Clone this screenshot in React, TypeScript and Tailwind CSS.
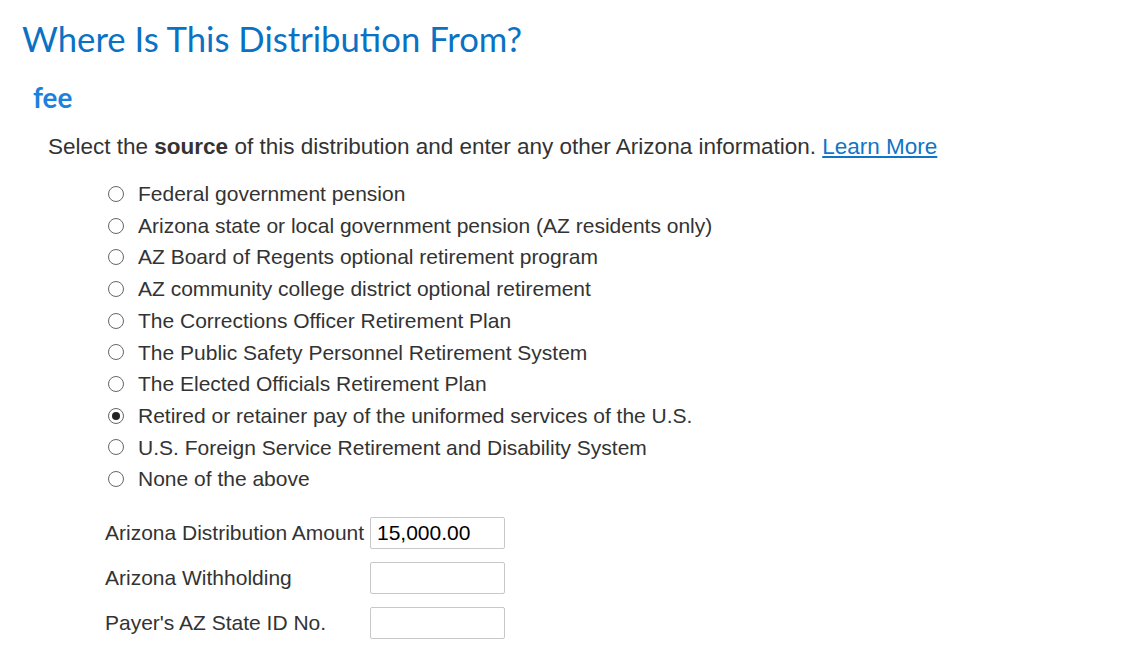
import { useState } from "react";

const sources = [
  "Federal government pension",
  "Arizona state or local government pension (AZ residents only)",
  "AZ Board of Regents optional retirement program",
  "AZ community college district optional retirement",
  "The Corrections Officer Retirement Plan",
  "The Public Safety Personnel Retirement System",
  "The Elected Officials Retirement Plan",
  "Retired or retainer pay of the uniformed services of the U.S.",
  "U.S. Foreign Service Retirement and Disability System",
  "None of the above",
];

function Radio({ checked }: { checked: boolean }) {
  return (
    <span className="flex h-[16px] w-[16px] items-center justify-center rounded-full border border-[#666] bg-white">
      {checked && <span className="h-[8px] w-[8px] rounded-full bg-[#222]" />}
    </span>
  );
}

export default function App() {
  const [selected, setSelected] = useState(7);

  const fields = [
    { label: "Arizona Distribution Amount", value: "15,000.00" },
    { label: "Arizona Withholding", value: "" },
    { label: "Payer's AZ State ID No.", value: "" },
  ];

  return (
    <div className="min-h-screen bg-white font-['Liberation_Sans',Arial,sans-serif] text-[#333]">
      <h1 className="pl-[22px] pt-[19px] font-['Lato',sans-serif] text-[34.7px] leading-[40px] text-[#0a72c4]">
        Where Is This Distribution From?
      </h1>
      <h2 className="mt-[23px] pl-[33px] font-['Lato',sans-serif] text-[27.8px] font-bold leading-[32px] text-[#1c80dd]">
        fee
      </h2>

      <p className="mt-[19px] pl-[48px] text-[22.5px] leading-[28px]">
        Select the <b>source</b> of this distribution and enter any other Arizona information.{" "}
        <a href="#" className="text-[#0f75c6] underline">
          Learn More
        </a>
      </p>

      <ul className="mt-[17px] pl-[108px]">
        {sources.map((s, i) => (
          <li
            key={s}
            onClick={() => setSelected(i)}
            className="flex h-[31.7px] cursor-pointer items-center gap-[14px] text-[21px]"
          >
            <Radio checked={selected === i} />
            <span>{s}</span>
          </li>
        ))}
      </ul>

      <div className="mt-[22px] flex flex-col gap-[13px] pl-[105px]">
        {fields.map((f) => (
          <div key={f.label} className="flex items-center">
            <span className="w-[265px] text-[21px]">{f.label}</span>
            <input
              defaultValue={f.value}
              className="h-[32px] w-[135px] rounded-[2px] border border-[#c8c8c8] px-[6px] text-[21px] text-black outline-none"
            />
          </div>
        ))}
      </div>
    </div>
  );
}
